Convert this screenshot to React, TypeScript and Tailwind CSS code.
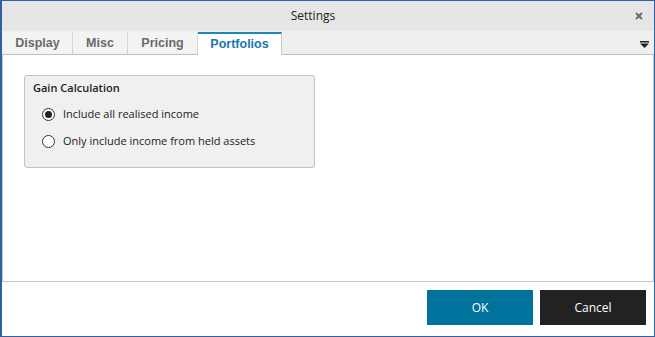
import React from "react";

const font = { fontFamily: '"Open Sans", "Noto Sans", sans-serif' };
const tabFont = { fontFamily: '"Liberation Sans", Arial, sans-serif' };

function Radio({ checked }: { checked: boolean }) {
  return (
    <span className="w-[13px] h-[13px] rounded-full border border-[#333] bg-white flex items-center justify-center shrink-0">
      {checked && <span className="w-[7px] h-[7px] rounded-full bg-[#222]" />}
    </span>
  );
}

export default function App() {
  const tabs = [
    { label: "Display", w: "w-[70px]" },
    { label: "Misc", w: "w-[55px]" },
    { label: "Pricing", w: "w-[70px]" },
  ];
  return (
    <div
      className="w-[655px] h-[337px] bg-white border border-l-2 border-[#2f5fa7] flex flex-col overflow-hidden"
      style={font}
    >
      <div className="h-[30px] bg-[#e6e6e6] relative flex items-center justify-center shrink-0">
        <span className="text-[12px] text-[#222] mr-[30px]">Settings</span>
        <svg className="absolute right-[11px] top-[11px]" width="8" height="8" viewBox="0 0 8 8">
          <path d="M1 1 L7 7 M7 1 L1 7" stroke="#6b6b6b" strokeWidth="2" />
        </svg>
      </div>
      <div className="h-[24px] bg-[#efefef] border-b border-[#bdbdbd] flex items-end pl-[1px] shrink-0 relative" style={tabFont}>
        {tabs.map((t) => (
          <div
            key={t.label}
            className={`${t.w} h-[22px] bg-[#f3f3f3] border-r border-[#d6d6d6] flex items-center justify-center text-[12.5px] font-bold text-[#6a6a6a]`}
          >
            {t.label}
          </div>
        ))}
        <div className="w-[84px] h-[23px] mb-[-1px] bg-white border-t-2 border-[#1f86b8] border-r border-r-[#c8c8c8] flex items-center justify-center text-[12.5px] font-bold text-[#1a78ad]">
          Portfolios
        </div>
        <svg className="absolute right-[5px] top-[10px]" width="9" height="7" viewBox="0 0 9 7">
          <rect x="0" y="0" width="9" height="1.5" fill="#222" />
          <path d="M0 2.5 H9 L4.5 7 Z" fill="#222" />
        </svg>
      </div>
      <div className="flex-1 border-x border-b border-[#c4c4c4] pl-[21px] pt-[20px]">
        <div className="w-[291px] h-[93px] bg-[#f0f0f0] border border-[#c2c2c2] rounded-[3px] pl-[8px] pt-[4px]">
          <div className="text-[11px] font-semibold text-[#222] leading-[16px]">Gain Calculation</div>
          <div className="flex items-center gap-[8px] mt-[9px] pl-[9px] h-[18px]">
            <Radio checked />
            <span className="text-[11px] text-[#222]">Include all realised income</span>
          </div>
          <div className="flex items-center gap-[8px] mt-[9px] pl-[9px] h-[18px]">
            <Radio checked={false} />
            <span className="text-[11px] text-[#222]">Only include income from held assets</span>
          </div>
        </div>
      </div>
      <div className="h-[54px] shrink-0 flex justify-end items-start pt-[8px] pr-[8px] gap-[7px]">
        <button className="w-[106px] h-[35px] bg-[#00739d] text-white text-[12px]">OK</button>
        <button className="w-[106px] h-[35px] bg-[#222222] text-white text-[12px]">Cancel</button>
      </div>
    </div>
  );
}
